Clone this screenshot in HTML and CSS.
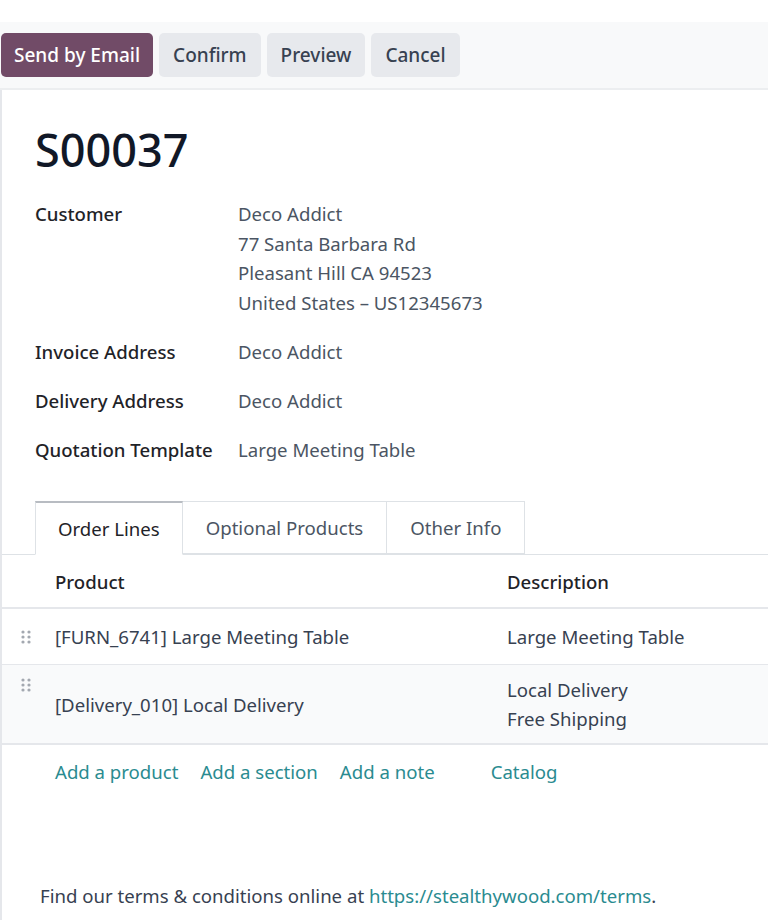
FILE: index.html
```html
<!DOCTYPE html>
<html lang="en">
<head>
  <meta charset="UTF-8">
  <title>S00037</title>
  <link rel="stylesheet" href="styles.css">
</head>
<body>
  <div class="top-gap"></div>

  <div class="control-panel">
    <button class="btn btn-primary">Send by Email</button>
    <button class="btn">Confirm</button>
    <button class="btn">Preview</button>
    <button class="btn">Cancel</button>
  </div>

  <div class="sheet">
    <h1 class="title">S00037</h1>

    <div class="fields">
      <div class="label">Customer</div>
      <div class="value">
        Deco Addict<br>
        77 Santa Barbara Rd<br>
        Pleasant Hill CA 94523<br>
        United States &ndash; US12345673
      </div>

      <div class="label">Invoice Address</div>
      <div class="value">Deco Addict</div>

      <div class="label">Delivery Address</div>
      <div class="value">Deco Addict</div>

      <div class="label">Quotation Template</div>
      <div class="value">Large Meeting Table</div>
    </div>

    <ul class="tabs">
      <li class="tab active">Order Lines</li>
      <li class="tab">Optional Products</li>
      <li class="tab">Other Info</li>
    </ul>

    <div class="lines">
      <div class="row head">
        <div class="handle"></div>
        <div class="cell">Product</div>
        <div class="cell">Description</div>
      </div>

      <div class="row">
        <div class="handle">
          <svg width="10" height="14" viewBox="0 0 10 14"><g fill="#a3a8b0"><circle cx="2" cy="2" r="1.6"/><circle cx="8" cy="2" r="1.6"/><circle cx="2" cy="7" r="1.6"/><circle cx="8" cy="7" r="1.6"/><circle cx="2" cy="12" r="1.6"/><circle cx="8" cy="12" r="1.6"/></g></svg>
        </div>
        <div class="cell">[FURN_6741] Large Meeting Table</div>
        <div class="cell">Large Meeting Table</div>
      </div>

      <div class="row alt">
        <div class="handle top">
          <svg width="10" height="14" viewBox="0 0 10 14"><g fill="#a3a8b0"><circle cx="2" cy="2" r="1.6"/><circle cx="8" cy="2" r="1.6"/><circle cx="2" cy="7" r="1.6"/><circle cx="8" cy="7" r="1.6"/><circle cx="2" cy="12" r="1.6"/><circle cx="8" cy="12" r="1.6"/></g></svg>
        </div>
        <div class="cell">[Delivery_010] Local Delivery</div>
        <div class="cell multi">Local Delivery<br>Free Shipping</div>
      </div>

      <div class="add-links">
        <a href="#">Add a product</a>
        <a href="#">Add a section</a>
        <a href="#">Add a note</a>
        <a href="#" class="catalog">Catalog</a>
      </div>
    </div>

    <p class="terms">Find our terms &amp; conditions online at <a href="#">https://stealthywood.com/terms</a>.</p>
  </div>
</body>
</html>
```

FILE: styles.css
```css
body {
  margin: 0;
  background: #fff;
  font-family: "Noto Sans", "Open Sans", sans-serif;
  color: #374151;
}
a {
  color: #2a8b90;
  text-decoration: none;
}

.top-gap {
  height: 22px;
}

/* control panel */
.control-panel {
  display: flex;
  gap: 6px;
  padding: 11px 1px;
  background: #f8f9fa;
  border-bottom: 2px solid #eceef0;
}
.btn {
  height: 44px;
  padding: 0 14px;
  border: 0;
  border-radius: 5px;
  background: #e7e9ed;
  color: #374151;
  font-family: inherit;
  font-size: 19px;
  font-weight: 500;
}
.btn-primary {
  background: #714b67;
  color: #fff;
  padding: 0 13px;
}

/* sheet */
.sheet {
  border-left: 2px solid #e5e7eb;
  min-height: 830px;
}
.title {
  margin: 0;
  padding: 29px 0 0 33px;
  font-size: 45px;
  line-height: 62px;
  font-weight: 500;
  color: #111827;
}

.fields {
  display: grid;
  grid-template-columns: 203px 1fr;
  row-gap: 19.5px;
  padding: 18px 0 0 33px;
  font-size: 18.6px;
  line-height: 29.5px;
}
.fields .label {
  color: #1f2328;
  font-weight: 500;
}
.fields .value {
  color: #4b5563;
}

/* tabs */
.tabs {
  display: flex;
  margin: 37px 0 0 0;
  padding: 0 0 0 33px;
  list-style: none;
  border-bottom: 1px solid #dee2e6;
}
.tab {
  height: 51px;
  line-height: 51px;
  padding: 0 23px;
  margin-bottom: -1px;
  border: 1px solid #dee2e6;
  border-left: 0;
  font-size: 18.6px;
  color: #4b5563;
}
.tab:first-child {
  border-left: 1px solid #dee2e6;
}
.tab.active {
  padding: 0 22px;
  border-top: 2px solid #b8bcc2;
  border-bottom-color: #fff;
  color: #1f2328;
}

/* order lines */
.row {
  display: grid;
  grid-template-columns: 53px 452px 1fr;
  align-items: center;
  min-height: 55px;
  border-bottom: 1px solid #e5e7eb;
  font-size: 18.6px;
  color: #374151;
}
.row.head {
  min-height: 52px;
  border-bottom-width: 2px;
  color: #1f2328;
  font-weight: 500;
}
.row.alt {
  min-height: 78px;
  background: #f9fafb;
  border-bottom-width: 2px;
}
.handle {
  padding-left: 19px;
  display: flex;
}
.handle.top {
  align-self: start;
  padding-top: 13px;
}
.cell.multi {
  line-height: 29px;
}

.add-links {
  display: flex;
  gap: 22px;
  padding: 14px 0 0 53px;
  font-size: 18.6px;
  line-height: 26px;
}
.add-links .catalog {
  margin-left: 34px;
}

.terms {
  margin: 98px 0 0 38px;
  font-size: 18.6px;
  color: #374151;
}
```
